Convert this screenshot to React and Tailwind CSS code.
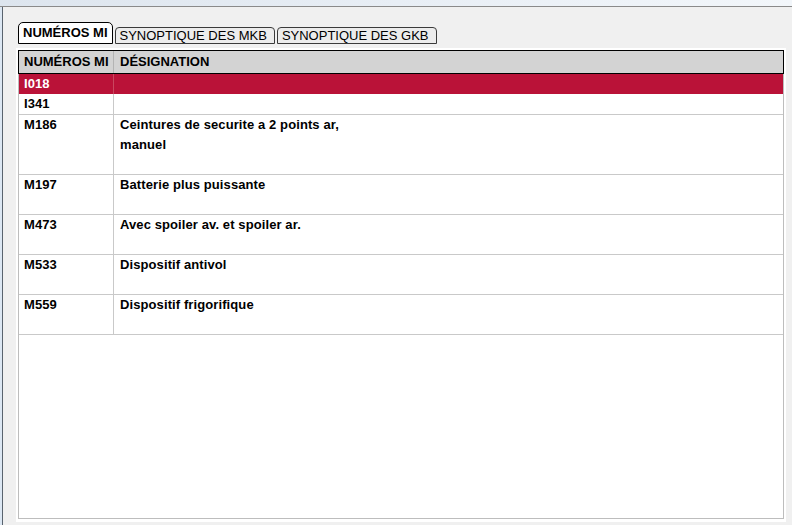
import React from "react";

const rows = [
  { code: "I018", text: [], h: "h-[20px]", selected: true },
  { code: "I341", text: [], h: "h-[21px]" },
  { code: "M186", text: ["Ceintures de securite a 2 points ar,", "manuel"], h: "h-[60px]" },
  { code: "M197", text: ["Batterie plus puissante"], h: "h-[40px]" },
  { code: "M473", text: ["Avec spoiler av. et spoiler ar."], h: "h-[40px]" },
  { code: "M533", text: ["Dispositif antivol"], h: "h-[40px]" },
  { code: "M559", text: ["Dispositif frigorifique"], h: "h-[40px]" },
];

export default function App() {
  return (
    <div className="w-[792px] h-[525px] bg-[#f0f0f0] flex flex-col overflow-hidden font-['Liberation_Sans',Arial,sans-serif] text-black">
      {/* fenêtre derrière, floue */}
      <div className="h-[7px] shrink-0 bg-gradient-to-r from-[#dde5ee] via-[#e8eef5] to-[#f2f6fa] border-b border-[#8a8a8a]" />

      <div className="flex flex-1 min-h-0">
        <div className="w-[2px] bg-[#dce7f3]" />
        <div className="w-px bg-[#59636e]" />

        <div className="flex-1 flex flex-col pl-[13px] pr-[6px] pt-[15px] pb-[3px]">
          {/* onglets */}
          <div className="flex items-end gap-[2px] ml-[2px] h-[22px] shrink-0">
            <div className="h-[22px] px-[4px] border border-black rounded-t-[5px] bg-white text-[13px] font-bold leading-[20px]">
              NUMÉROS MI
            </div>
            <div className="h-[17px] pl-[4px] pr-[7px] border border-[#3a3a3a] rounded-t-[4px] bg-[#ececec] text-[13px] leading-[15px]">
              SYNOPTIQUE DES MKB
            </div>
            <div className="h-[17px] pl-[4px] pr-[7px] border border-[#3a3a3a] rounded-t-[4px] bg-[#ececec] text-[13px] leading-[15px]">
              SYNOPTIQUE DES GKB
            </div>
          </div>

          {/* panneau */}
          <div className="mt-[4px] flex-1 min-h-0 flex flex-col bg-white p-[2px] pb-[3px]">
            <div className="h-[24px] shrink-0 flex border border-black bg-[#d3d3d3] text-[13px] font-bold">
              <div className="w-[95px] shrink-0 pl-[5px] flex items-center border-r border-[#b4b4b4]">NUMÉROS MI</div>
              <div className="flex-1 pl-[6px] flex items-center">DÉSIGNATION</div>
            </div>

            <div className="flex-1 min-h-0 border-x border-b border-[#bdbdbd] bg-white text-[13px] tracking-[0.1px] font-bold leading-[20px]">
              {rows.map((r) => (
                <div
                  key={r.code}
                  className={
                    r.selected
                      ? `${r.h} flex bg-[#ba1238] text-white`
                      : `${r.h} flex border-b border-[#c9c9c9]`
                  }
                >
                  <div
                    className={
                      r.selected
                        ? "w-[95px] shrink-0 pl-[5px] border-r border-[#c9475f]"
                        : "w-[95px] shrink-0 pl-[5px] border-r border-[#c9c9c9]"
                    }
                  >
                    {r.code}
                  </div>
                  <div className="flex-1 pl-[6px]">
                    {r.text.map((t) => (
                      <div key={t}>{t}</div>
                    ))}
                  </div>
                </div>
              ))}
            </div>
          </div>
        </div>
      </div>
    </div>
  );
}
